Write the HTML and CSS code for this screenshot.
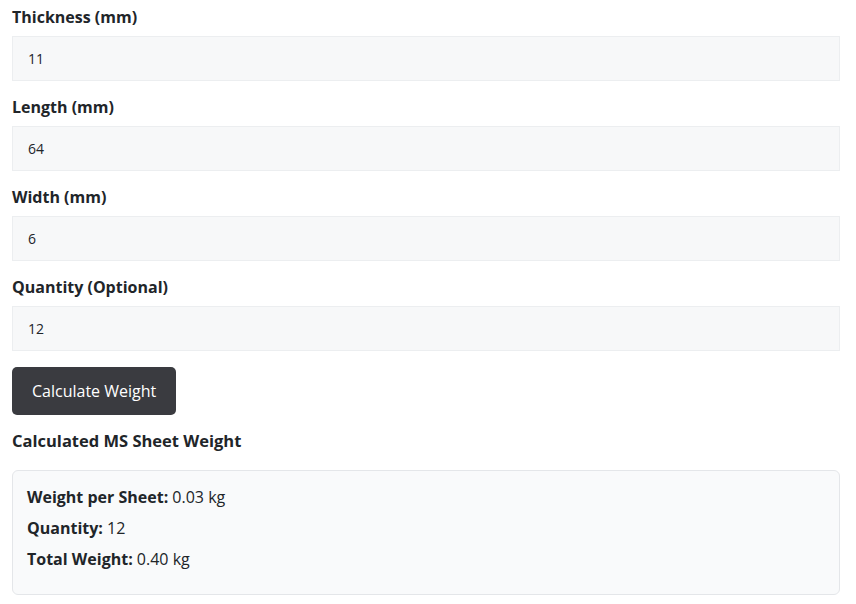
FILE: index.html
```html
<!DOCTYPE html>
<html>
<head>
<meta charset="utf-8">
<link rel="stylesheet" href="styles.css">
</head>
<body>
<div class="calc">
  <div class="field">
    <label class="label">Thickness (mm)</label>
    <div class="input">11</div>
  </div>
  <div class="field">
    <label class="label">Length (mm)</label>
    <div class="input">64</div>
  </div>
  <div class="field">
    <label class="label">Width (mm)</label>
    <div class="input">6</div>
  </div>
  <div class="field field-last">
    <label class="label">Quantity (Optional)</label>
    <div class="input">12</div>
  </div>
  <button class="btn">Calculate Weight</button>
  <h3 class="result-title">Calculated MS Sheet Weight</h3>
  <div class="result">
    <p><strong>Weight per Sheet:</strong> 0.03 kg</p>
    <p><strong>Quantity:</strong> 12</p>
    <p><strong>Total Weight:</strong> 0.40 kg</p>
  </div>
</div>
</body>
</html>
```
FILE: styles.css
```css
html, body {
  margin: 0;
  padding: 0;
  background: #ffffff;
}
body {
  font-family: "Open Sans", "Noto Sans", sans-serif;
  color: #212529;
  font-size: 16px;
  line-height: 24px;
}
.calc {
  padding: 5px 16px 0 12px;
  display: flex;
  flex-direction: column;
  align-items: stretch;
}
.field {
  display: flex;
  flex-direction: column;
  margin-bottom: 14px;
}
.field-last {
  margin-bottom: 16px;
}
.label {
  font-weight: 700;
  margin-bottom: 7px;
}
.input {
  box-sizing: content-box;
  border: 1px solid #eceef0;
  background: #f7f8f9;
  padding: 0 15px;
  font-size: 14px;
  line-height: 43px;
  height: 43px;
  color: #212529;
}
.btn {
  align-self: flex-start;
  box-sizing: border-box;
  height: 48px;
  background: #3a3b40;
  color: #ffffff;
  border: none;
  border-radius: 5px;
  font-family: inherit;
  font-size: 16px;
  line-height: 24px;
  padding: 0 20px;
  margin: 0 0 14px;
}
.result-title {
  font-size: 16.5px;
  line-height: 24px;
  font-weight: 700;
  margin: 0 0 17px;
}
.result {
  border: 1px solid #e4e6e9;
  border-radius: 6px;
  background: #f9fafb;
  padding: 14px 14px 23px;
}
.result p {
  margin: 0 0 7px;
}
.result p:last-child {
  margin-bottom: 0;
}
.result strong {
  font-weight: 700;
}
```
